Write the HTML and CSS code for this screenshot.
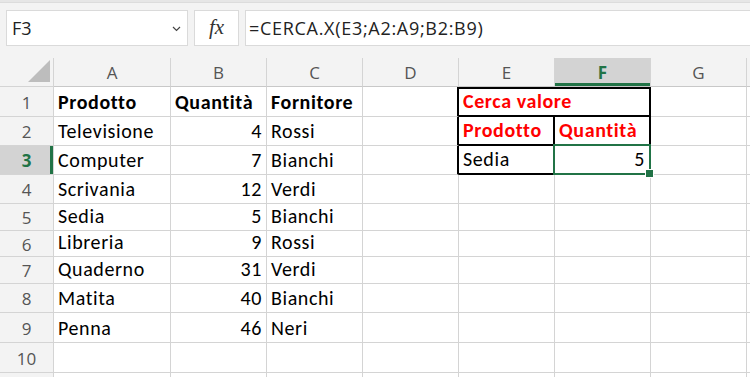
FILE: index.html
```html
<!DOCTYPE html>
<html lang="it">
<head>
    <meta charset="UTF-8">
    <title>CERCA.X</title>
    <link rel="stylesheet" href="styles.css">
</head>
<body>
    <div class="topline"></div>

    <div class="formula-bar">
        <div class="namebox">
            <span>F3</span>
            <svg class="chevron" width="9" height="6" viewBox="0 0 9 6"><polyline points="1,1 4.5,4.5 8,1" fill="none" stroke="#444" stroke-width="1.2"/></svg>
        </div>
        <div class="fx-box"><span class="fx">fx</span></div>
        <div class="formula">=CERCA.X(E3;A2:A9;B2:B9)</div>
    </div>

    <div class="sheet">
        <!-- intestazioni colonne -->
        <div class="corner"><div class="tri"></div></div>
        <div class="ch">A</div>
        <div class="ch">B</div>
        <div class="ch">C</div>
        <div class="ch">D</div>
        <div class="ch">E</div>
        <div class="ch ch-sel">F</div>
        <div class="ch">G</div>
        <div class="ch last"></div>

        <!-- riga 1 -->
        <div class="rh r1">1</div>
        <div class="c r1 b">Prodotto</div>
        <div class="c r1 b">Quantità</div>
        <div class="c r1 b">Fornitore</div>
        <div class="c r1 edge-r"></div>
        <div class="c r1 red box-top box-b span2">Cerca valore</div>
        <div class="c r1"></div>
        <div class="c r1 last"></div>

        <!-- riga 2 -->
        <div class="rh r2">2</div>
        <div class="c r2">Televisione</div>
        <div class="c r2 num">4</div>
        <div class="c r2">Rossi</div>
        <div class="c r2 edge-r"></div>
        <div class="c r2 red box-b box-r">Prodotto</div>
        <div class="c r2 red box-b box-r">Quantità</div>
        <div class="c r2"></div>
        <div class="c r2 last"></div>

        <!-- riga 3 -->
        <div class="rh r3 rh-sel">3</div>
        <div class="c r3">Computer</div>
        <div class="c r3 num">7</div>
        <div class="c r3">Bianchi</div>
        <div class="c r3 edge-r"></div>
        <div class="c r3 box-b box-r">Sedia</div>
        <div class="c r3 num box-b box-r active">5<div class="sel"></div></div>
        <div class="c r3"></div>
        <div class="c r3 last"></div>

        <div class="rh r4">4</div>
        <div class="c r4">Scrivania</div>
        <div class="c r4 num">12</div>
        <div class="c r4">Verdi</div>
        <div class="c r4"></div><div class="c r4"></div><div class="c r4"></div><div class="c r4"></div><div class="c r4 last"></div>

        <div class="rh r5">5</div>
        <div class="c r5">Sedia</div>
        <div class="c r5 num">5</div>
        <div class="c r5">Bianchi</div>
        <div class="c r5"></div><div class="c r5"></div><div class="c r5"></div><div class="c r5"></div><div class="c r5 last"></div>

        <div class="rh r6">6</div>
        <div class="c r6">Libreria</div>
        <div class="c r6 num">9</div>
        <div class="c r6">Rossi</div>
        <div class="c r6"></div><div class="c r6"></div><div class="c r6"></div><div class="c r6"></div><div class="c r6 last"></div>

        <div class="rh r7">7</div>
        <div class="c r7">Quaderno</div>
        <div class="c r7 num">31</div>
        <div class="c r7">Verdi</div>
        <div class="c r7"></div><div class="c r7"></div><div class="c r7"></div><div class="c r7"></div><div class="c r7 last"></div>

        <div class="rh r8">8</div>
        <div class="c r8">Matita</div>
        <div class="c r8 num">40</div>
        <div class="c r8">Bianchi</div>
        <div class="c r8"></div><div class="c r8"></div><div class="c r8"></div><div class="c r8"></div><div class="c r8 last"></div>

        <div class="rh r9">9</div>
        <div class="c r9">Penna</div>
        <div class="c r9 num">46</div>
        <div class="c r9">Neri</div>
        <div class="c r9"></div><div class="c r9"></div><div class="c r9"></div><div class="c r9"></div><div class="c r9 last"></div>

        <div class="rh r10">10</div>
        <div class="c r10"></div><div class="c r10"></div><div class="c r10"></div><div class="c r10"></div><div class="c r10"></div><div class="c r10"></div><div class="c r10"></div><div class="c r10 last"></div>

        <div class="rh r11"></div>
        <div class="c r11"></div><div class="c r11"></div><div class="c r11"></div><div class="c r11"></div><div class="c r11"></div><div class="c r11"></div><div class="c r11"></div><div class="c r11 last"></div>
    </div>
</body>
</html>
```

FILE: styles.css
```css
* {
    box-sizing: border-box;
}

body {
    margin: 0;
    width: 750px;
    height: 377px;
    overflow: hidden;
    background: #f3f3f3;
    font-family: "Open Sans", "Noto Sans", sans-serif;
}

.topline {
    height: 3px;
    background: #e6e6e6;
    border-bottom: 1px solid #dcdcdc;
}

/* barra della formula */
.formula-bar {
    display: flex;
    gap: 6px;
    height: 55px;
    padding: 7px 0 0 6px;
}

.namebox,
.fx-box,
.formula {
    height: 36px;
    background: #fff;
    border: 1px solid #dadada;
    display: flex;
    align-items: center;
}

.namebox {
    width: 182px;
    padding: 0 6px 0 5px;
    justify-content: space-between;
    font-size: 18px;
    color: #222;
}

.chevron {
    margin-top: 2px;
}

.fx-box {
    width: 45px;
    justify-content: center;
}

.fx {
    font-family: "Liberation Serif", serif;
    font-style: italic;
    font-size: 21px;
    color: #333;
    margin-top: -2px;
}

.formula {
    flex: 1;
    margin-right: -4px;
    padding-left: 3px;
    font-size: 18px;
    letter-spacing: 0.7px;
    color: #222;
}

/* griglia del foglio */
.sheet {
    display: grid;
    grid-template-columns: 54px 117px 96px 96px 96px 96px 96px 96px 1fr;
    grid-template-rows: 29px 30px 29px 29px 29px 27px 26px 27px 29px 30px 30px 10px;
}

.corner {
    border-right: 1px solid #d4d4d4;
    border-bottom: 1px solid #d4d4d4;
    position: relative;
}

.tri {
    position: absolute;
    right: 3px;
    bottom: 4px;
    width: 0;
    height: 0;
    border-left: 22px solid transparent;
    border-bottom: 22px solid #bdbdbd;
}

.ch {
    border-right: 1px solid #d4d4d4;
    border-bottom: 1px solid #c8c8c8;
    display: flex;
    align-items: center;
    justify-content: center;
    font-size: 17px;
    color: #555;
    padding-top: 1px;
}

.ch-sel {
    background: #d3d3d3;
    color: #217346;
    font-weight: bold;
    box-shadow: inset 0 -3px 0 #217346;
}

.rh {
    border-right: 1px solid #d4d4d4;
    border-bottom: 1px solid #d4d4d4;
    display: flex;
    align-items: center;
    justify-content: center;
    font-size: 17px;
    color: #555;
    padding-top: 1px;
}

.rh-sel {
    background: #d3d3d3;
    color: #217346;
    font-weight: bold;
    box-shadow: inset -3px 0 0 #217346;
}

.c {
    background: #fff;
    border-right: 1px solid #d4d4d4;
    border-bottom: 1px solid #d4d4d4;
    display: flex;
    align-items: flex-end;
    padding: 0 4px 2px 4px;
    font-family: Carlito, Calibri, Lato, sans-serif;
    font-size: 20px;
    letter-spacing: 0.6px;
    line-height: 23px;
    color: #000;
    white-space: nowrap;
}

.last {
    border-right: none;
}

.b {
    font-weight: bold;
}

.num {
    justify-content: flex-end;
    padding-right: 4px;
}

.red {
    color: #ff0000;
    font-weight: bold;
}

/* bordo nero della tabella di ricerca */
.span2 {
    grid-column: span 2;
    border-right: 2px solid #000;
}

.edge-r {
    border-right: 2px solid #000;
}

.box-top {
    border-top: 2px solid #000;
}

.box-b {
    border-bottom: 2px solid #000;
}

.box-r {
    border-right: 2px solid #000;
}

/* cella attiva */
.active {
    position: relative;
}

.sel {
    position: absolute;
    top: -2px;
    left: -2px;
    right: -2px;
    bottom: -2px;
    border: 2px solid #217346;
}

.sel::after {
    content: "";
    position: absolute;
    right: -5px;
    bottom: -5px;
    width: 7px;
    height: 7px;
    background: #217346;
    border: 1px solid #fff;
}
```
